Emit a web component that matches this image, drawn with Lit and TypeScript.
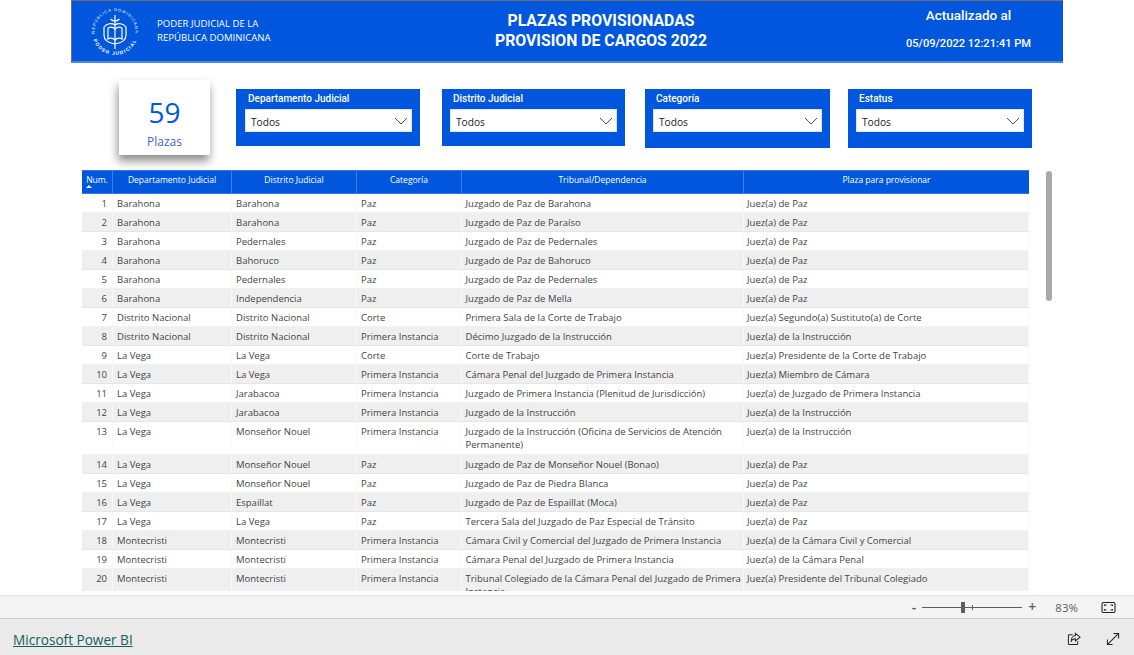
import {LitElement, css, html, svg} from 'lit';
import {customElement} from 'lit/decorators.js';

const PAZ = 'Juez(a) de Paz';
const INST = 'Juez(a) de la Instrucción';
const PI = 'Primera Instancia';

const rows: string[][] = [
  ['Barahona', 'Barahona', 'Paz', 'Juzgado de Paz de Barahona', PAZ],
  ['Barahona', 'Barahona', 'Paz', 'Juzgado de Paz de Paraíso', PAZ],
  ['Barahona', 'Pedernales', 'Paz', 'Juzgado de Paz de Pedernales', PAZ],
  ['Barahona', 'Bahoruco', 'Paz', 'Juzgado de Paz de Bahoruco', PAZ],
  ['Barahona', 'Pedernales', 'Paz', 'Juzgado de Paz de Pedernales', PAZ],
  ['Barahona', 'Independencia', 'Paz', 'Juzgado de Paz de Mella', PAZ],
  ['Distrito Nacional', 'Distrito Nacional', 'Corte', 'Primera Sala de la Corte de Trabajo', 'Juez(a) Segundo(a) Sustituto(a) de Corte'],
  ['Distrito Nacional', 'Distrito Nacional', PI, 'Décimo Juzgado de la Instrucción', INST],
  ['La Vega', 'La Vega', 'Corte', 'Corte de Trabajo', 'Juez(a) Presidente de la Corte de Trabajo'],
  ['La Vega', 'La Vega', PI, 'Cámara Penal del Juzgado de Primera Instancia', 'Juez(a) Miembro de Cámara'],
  ['La Vega', 'Jarabacoa', PI, 'Juzgado de Primera Instancia (Plenitud de Jurisdicción)', 'Juez(a) de Juzgado de Primera Instancia'],
  ['La Vega', 'Jarabacoa', PI, 'Juzgado de la Instrucción', INST],
  ['La Vega', 'Monseñor Nouel', PI, 'Juzgado de la Instrucción (Oficina de Servicios de Atención Permanente)', INST],
  ['La Vega', 'Monseñor Nouel', 'Paz', 'Juzgado de Paz de Monseñor Nouel (Bonao)', PAZ],
  ['La Vega', 'Monseñor Nouel', 'Paz', 'Juzgado de Paz de Piedra Blanca', PAZ],
  ['La Vega', 'Espaillat', 'Paz', 'Juzgado de Paz de Espaillat (Moca)', PAZ],
  ['La Vega', 'La Vega', 'Paz', 'Tercera Sala del Juzgado de Paz Especial de Tránsito', PAZ],
  ['Montecristi', 'Montecristi', PI, 'Cámara Civil y Comercial del Juzgado de Primera Instancia', 'Juez(a) de la Cámara Civil y Comercial'],
  ['Montecristi', 'Montecristi', PI, 'Cámara Penal del Juzgado de Primera Instancia', 'Juez(a) de la Cámara Penal'],
  ['Montecristi', 'Montecristi', PI, 'Tribunal Colegiado de la Cámara Penal del Juzgado de Primera Instancia', 'Juez(a) Presidente del Tribunal Colegiado'],
];

const columns = ['Departamento Judicial', 'Distrito Judicial', 'Categoría', 'Tribunal/Dependencia', 'Plaza para provisionar'];
const slicers = ['Departamento Judicial', 'Distrito Judicial', 'Categoría', 'Estatus'];

const logo = svg`
  <defs>
    <path id="arcTop" d="M5.500 31A20.500 20.500 0 1 1 44.500 31"></path>
    <path id="arcBottom" d="M2 25A23 23 0 0 0 48 25"></path>
  </defs>
  <text class="ring"><textPath href="#arcTop" startOffset="50%" text-anchor="middle">REPÚBLICA DOMINICANA</textPath></text>
  <text class="ring strong"><textPath href="#arcBottom" startOffset="50%" text-anchor="middle">PODER JUDICIAL</textPath></text>
  <g fill="none" stroke="#fff" stroke-width="1.2">
    <path d="M25 8v34"></path>
    <path d="M20.500 12c1.500 1.500 3 2 4.500 2s3-.5 4.500-2"></path>
    <path d="M14 20c3-4 8-4 11-2 3-2 8-2 11 2"></path>
    <path d="M14 20v8c0 5 4 8 11 9 7-1 11-4 11-9v-8"></path>
    <path d="M18 21c2-1 5-1 7 1 2-2 5-2 7-1v11c-2-1-5-1-7 1-2-2-5-2-7-1z"></path>
  </g>`;

@customElement('app-root')
export class AppRoot extends LitElement {
  static styles = css`
    :host {
      display: flex;
      flex-direction: column;
      width: 1134px;
      height: 655px;
      overflow: hidden;
      background: #fff;
      font-family: 'Open Sans', 'Liberation Sans', sans-serif;
    }

    .canvas {
      flex: 1;
      min-height: 0;
      overflow: hidden;
    }

    .banner {
      display: grid;
      grid-template-columns: 85px 300px 288px 1fr;
      width: 992px;
      height: 63px;
      margin-left: 71px;
      box-sizing: border-box;
      background: #0057de;
      border-top: 1px solid #6f6f6f;
      border-left: 1px solid #6f6f6f;
      border-bottom: 2px solid #4a86e0;
      color: #fff;
    }

    .logo {
      width: 50px;
      height: 50px;
      margin: 6px 0 0 18px;
    }

    .logo .ring {
      font: 4px 'Liberation Sans', sans-serif;
      letter-spacing: .95px;
      fill: #fff;
    }

    .logo .ring.strong {
      font-weight: 700;
      font-size: 4.8px;
      letter-spacing: 1.1px;
    }

    .org {
      padding-top: 16px;
      font-size: 9.6px;
      line-height: 14px;
    }

    .title {
      padding-top: 10px;
      font: 700 15.8px/20px Roboto, sans-serif;
      text-align: center;
    }

    .updated {
      width: 135px;
      margin-left: 156px;
      padding-top: 6px;
      font: 500 13.5px/16px Roboto, sans-serif;
      text-align: center;
    }

    .updated div + div {
      margin-top: 13px;
      font-size: 11.1px;
    }

    .filters {
      display: flex;
      align-items: flex-start;
      padding: 17px 0 0 119px;
      height: 90px;
    }

    .card {
      flex: none;
      width: 91px;
      height: 75px;
      margin-right: 26px;
      background: #fff;
      box-shadow: -1px 6px 9px rgba(0, 0, 0, .45);
      color: #0057de;
      text-align: center;
    }

    .card b {
      display: block;
      padding-top: 15px;
      font: 400 28px/34px 'Open Sans', sans-serif;
    }

    .card span {
      font-size: 12px;
      line-height: 18px;
      color: #3f5fd8;
    }

    .slicer {
      flex: none;
      box-sizing: border-box;
      width: 184px;
      height: 57px;
      margin-top: 9px;
      padding: 4px 8px 0 9px;
      background: #0057de;
      color: #fff;
    }

    .slicer:nth-child(3) { width: 183px; margin-left: 22px; padding-left: 8px; }
    .slicer:nth-child(4) { width: 185px; height: 59px; margin-left: 20px; padding-left: 8px; }
    .slicer:nth-child(5) { width: 184px; height: 59px; margin-left: 18px; padding-left: 8px; }

    .slicer label {
      display: block;
      height: 16px;
      padding-left: 3px;
      font: 500 10px/12px Roboto, sans-serif;
    }

    .select {
      display: flex;
      align-items: center;
      justify-content: space-between;
      height: 23px;
      box-sizing: border-box;
      padding: 2px 3px 0 5px;
      background: #fff;
      border: 1px solid #dfe6f5;
      color: #222;
      font-size: 10.2px;
    }

    .select svg {
      width: 14px;
      height: 8px;
      margin-top: -2px;
    }

    .data {
      display: flex;
      align-items: flex-start;
      padding-left: 82px;
    }

    .table {
      flex: none;
      width: 947px;
      height: 421px;
      overflow: hidden;
      font-size: 9.5px;
      color: #444;
    }

    .row {
      display: grid;
      grid-template-columns: 31px 119px 125px 105px 282px 285px;
    }

    .head {
      height: 24px;
      background: #0057de;
      color: #fff;
      font-size: 8.5px;
      border-top: 1px solid #2f78e6;
      border-bottom: 1px solid #2f78e6;
      box-sizing: border-box;
    }

    .head div {
      padding-top: 3px;
      line-height: 12px;
      text-align: center;
      border-right: 1px solid #3a80e8;
    }

    .head div:last-child {
      border-right: 0;
    }

    .sort {
      display: block;
      width: 0;
      height: 0;
      margin: -1px 0 0 4px;
      border: 3px solid transparent;
      border-top: 0;
      border-bottom-color: #fff;
    }

    .body {
      min-height: 19px;
      box-sizing: border-box;
      line-height: 13px;
      border-bottom: 1px solid #f1f1f1;
    }

    .body:nth-child(even) {
      background: #efefef;
      border-bottom-color: #e6e6e6;
    }

    .body:nth-child(13) {
      min-height: 33px;
    }

    .body div {
      padding: 3px 0 2px 4px;
      border-right: 1px solid #f8f8f8;
    }

    .body div:nth-child(5) {
      padding-left: 3.5px;
    }

    .body div:nth-child(6) {
      padding-left: 3px;
    }

    .body .num {
      padding: 3px 5px 2px 0;
      text-align: right;
    }

    .thumb {
      flex: none;
      width: 6px;
      height: 130px;
      margin: 1px 0 0 17px;
      border-radius: 3px;
      background: #a9a9a9;
    }

    .status {
      display: flex;
      align-items: center;
      justify-content: flex-end;
      flex: none;
      height: 24px;
      box-sizing: border-box;
      padding-right: 18px;
      background: #f3f3f3;
      border-top: 1px solid #e3e3e3;
      border-bottom: 1px solid #cfcfcf;
      color: #605e5c;
      font-size: 11.5px;
    }

    .zoom-sign {
      font-size: 14px;
      font-weight: 600;
      line-height: 14px;
    }

    .slider {
      position: relative;
      width: 100px;
      height: 1px;
      margin: 0 6px;
      background: #605e5c;
    }

    /* thumb and centre tick sit on top of the track */
    .slider i {
      position: absolute;
      left: 39px;
      top: -5px;
      width: 4px;
      height: 11px;
      background: #605e5c;
    }

    .slider u {
      position: absolute;
      left: 50px;
      top: -2px;
      width: 1px;
      height: 5px;
      background: #605e5c;
    }

    .pct {
      margin: 0 23px 0 19px;
    }

    .footer {
      display: flex;
      align-items: center;
      justify-content: space-between;
      flex: none;
      height: 36px;
      box-sizing: border-box;
      padding: 4px 14px 0 13px;
      background: #eaeaea;
    }

    .footer a {
      color: #14605c;
      font-size: 13.6px;
      font-weight: 500;
      text-decoration: underline;
    }

    .actions {
      display: flex;
      gap: 25px;
    }

    svg.icon {
      display: block;
      width: 15px;
      height: 15px;
      fill: none;
      stroke: #252423;
      stroke-width: 1.1;
    }

    .actions svg.icon {
      width: 14px;
      height: 14px;
    }
  `;

  render() {
    return html`
      <div class="canvas">
        <header class="banner">
          <svg class="logo" viewBox="0 0 50 50">${logo}</svg>
          <div class="org">PODER JUDICIAL DE LA<br />REPÚBLICA DOMINICANA</div>
          <div class="title">PLAZAS PROVISIONADAS<br />PROVISION DE CARGOS 2022</div>
          <div class="updated"><div>Actualizado al</div><div>05/09/2022 12:21:41 PM</div></div>
        </header>
        <section class="filters">
          <div class="card"><b>59</b><span>Plazas</span></div>
          ${slicers.map(
            (name) => html`
              <div class="slicer">
                <label>${name}</label>
                <div class="select">
                  <span>Todos</span>
                  <svg viewBox="0 0 14 8" fill="none" stroke="#555" stroke-width="1"><path d="M1 1l6 6 6-6"></path></svg>
                </div>
              </div>
            `
          )}
        </section>
        <section class="data">
          <div class="table">
            <div class="row head">
              <div>Num.<span class="sort"></span></div>
              ${columns.map((c) => html`<div>${c}</div>`)}
            </div>
            <div>
              ${rows.map(
                (r, i) => html`
                  <div class="row body">
                    <div class="num">${i + 1}</div>
                    ${r.map((c) => html`<div>${c}</div>`)}
                  </div>
                `
              )}
            </div>
          </div>
          <div class="thumb"></div>
        </section>
      </div>
      <div class="status">
        <span class="zoom-sign">-</span>
        <div class="slider"><i></i><u></u></div>
        <span class="zoom-sign">+</span>
        <span class="pct">83%</span>
        <svg class="icon" viewBox="0 0 15 15">
          <rect x="1" y="2.500" width="13" height="10" rx="1.500"></rect>
          <path d="M3.500 6V5h2M9.500 5h2v1M11.500 9v1h-2M5.500 10h-2V9"></path>
        </svg>
      </div>
      <footer class="footer">
        <a href="#">Microsoft Power BI</a>
        <div class="actions">
          <svg class="icon" viewBox="0 0 15 15">
            <path d="M6 3H2.500A1 1 0 0 0 1.500 4v8.500a1 1 0 0 0 1 1h8a1 1 0 0 0 1-1V10"></path>
            <path d="M9 1.500l5 4-5 4V7.200C6.500 7.200 5 8.500 4.500 10.500 4.300 7 6 4 9 3.800z"></path>
          </svg>
          <svg class="icon" viewBox="0 0 15 15">
            <path d="M1.500 13.500L13.500 1.500M8 1.500h5.500V7M1.500 8v5.500H7"></path>
          </svg>
        </div>
      </footer>
    `;
  }
}
